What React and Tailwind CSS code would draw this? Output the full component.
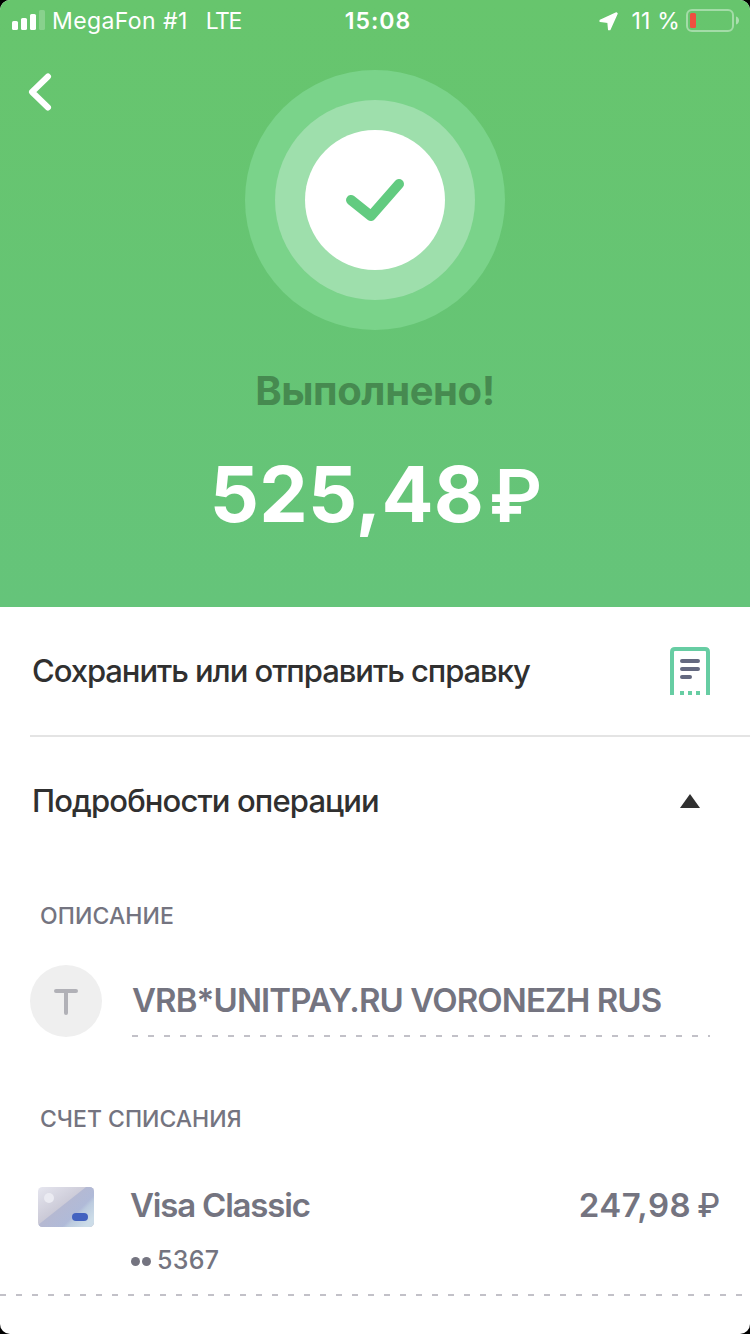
import React from 'react';

const SignalIcon = () => (
  <svg width="33" height="20" viewBox="0 0 33 20" fill="#fff">
    <rect x="0" y="11" width="6" height="9" rx="1.6" />
    <rect x="9" y="8" width="6" height="12" rx="1.6" />
    <rect x="18" y="4" width="6" height="16" rx="1.6" />
    <rect x="27" y="0" width="6" height="20" rx="1.6" opacity="0.22" />
  </svg>
);

const LocationIcon = () => (
  <svg width="19" height="19" viewBox="0 0 19 19" fill="#fff">
    <path
      d="M17.4 1 L1.2 8.4 L1.2 9.4 L9 10.2 L9.7 17.6 L10.8 17.6 L18 1.6 Z"
      stroke="#fff"
      strokeWidth="1.4"
      strokeLinejoin="round"
    />
  </svg>
);

const BatteryIcon = () => (
  <svg width="54" height="24" viewBox="0 0 54 24" fill="none">
    <rect x="1" y="2" width="46" height="21" rx="5" stroke="#fff" strokeOpacity="0.4" strokeWidth="2" />
    <rect x="4" y="5" width="6" height="15" rx="1.5" fill="#ef4f40" />
    <path d="M50 8.5 C54 9.5 54 15.5 50 16.5 Z" fill="#fff" fillOpacity="0.45" />
  </svg>
);

const ReceiptIcon = () => (
  <svg width="40" height="48" viewBox="0 0 40 48" fill="none">
    <path d="M2 48 V5 Q2 2 5 2 H35 Q38 2 38 5 V48" stroke="#67cda3" strokeWidth="4" />
    <path d="M12 14 H28 M12 22 H28 M12 30 H20" stroke="#646980" strokeWidth="4" strokeLinecap="round" />
    <path d="M10 46 H14 M18 46 H22 M26 46 H30" stroke="#67cda3" strokeWidth="4" />
  </svg>
);

const CardIcon = () => (
  <svg width="56" height="40" viewBox="0 0 56 40">
    <defs>
      <linearGradient id="cardBase" x1="0" y1="0" x2="0.75" y2="0.8">
        <stop offset="0" stopColor="#e6e6ef" />
        <stop offset="1" stopColor="#b9b7c7" />
      </linearGradient>
      <linearGradient id="cardShine" gradientUnits="userSpaceOnUse" x1="24" y1="18" x2="46" y2="40">
        <stop offset="0" stopColor="#b5b9d2" />
        <stop offset="0.5" stopColor="#b0bad8" />
        <stop offset="0.62" stopColor="#bccbdf" />
        <stop offset="1" stopColor="#ccdce8" />
      </linearGradient>
      <clipPath id="cardClip">
        <rect width="56" height="40" rx="4.5" />
      </clipPath>
    </defs>
    <g clipPath="url(#cardClip)">
      <rect width="56" height="40" fill="url(#cardBase)" />
      <path d="M48 0 H56 V40 H0 V38 Z" fill="url(#cardShine)" />
      <circle cx="11" cy="11" r="5" fill="#ebebf2" />
      <rect x="34" y="26" width="16" height="8" rx="4" fill="#4362c0" />
    </g>
  </svg>
);

const StatusBar = () => (
  <div className="grid h-10 grid-cols-3 items-center pl-3 pr-[10px] text-[23px] leading-none text-white">
    <div className="flex items-center">
      <SignalIcon />
      <span className="ml-[7px] pt-[2px] tracking-[0.4px]">MegaFon #1</span>
      <span className="ml-[18px] pt-[2px] tracking-[-1.4px]">LTE</span>
    </div>
    <span className="pl-1 pt-[2px] text-center font-semibold tracking-[1px]">15:08</span>
    <div className="flex items-center justify-end">
      <span className="pt-[2px]">
        <LocationIcon />
      </span>
      <span className="ml-[13px] mr-[6px] pt-[2px] tracking-[0.2px]">11 %</span>
      <BatteryIcon />
    </div>
  </div>
);

const SuccessMark = () => (
  <div className="flex size-[260px] items-center justify-center rounded-full bg-[#7ad38a]">
    <div className="flex size-[200px] items-center justify-center rounded-full bg-[#9edfac]">
      <div className="flex size-[140px] items-center justify-center rounded-full bg-white">
        <svg width="140" height="140" viewBox="0 0 140 140" fill="none">
          <path d="M46 70 L66 86 L94 54" stroke="#62cb80" strokeWidth="10" strokeLinecap="round" strokeLinejoin="round" />
        </svg>
      </div>
    </div>
  </div>
);

const DashedLine = () => (
  <div className="h-[2px] w-full bg-[repeating-linear-gradient(90deg,#c2c1c8_0px,#c2c1c8_6px,transparent_6px,transparent_16px)]" />
);

const ActionRow = ({ title, children }) => (
  <div className="flex h-32 items-center justify-between pl-8 pr-10">
    <span className="whitespace-nowrap text-[31px] font-medium leading-10 text-[#303030]">{title}</span>
    {children}
  </div>
);

const SectionLabel = ({ children }) => (
  <div className="pl-10 text-[23px] font-medium leading-8 text-[#747480]">{children}</div>
);

export default function App() {
  return (
    <div className="h-[1334px] w-[750px] bg-black font-['Inter','Liberation_Sans',sans-serif]">
      <div className="flex h-full flex-col overflow-hidden rounded-[10px] bg-white">
        {/* Operation status */}
        <header className="h-[607px] bg-linear-to-b from-[#67c56d] to-[#65c47a]">
          <StatusBar />
          <div className="grid grid-cols-[245px_260px_245px] pt-[30px]">
            <svg className="ml-7 mt-[2px]" width="24" height="40" viewBox="0 0 24 40" fill="none">
              <path d="M20 4.5 L4 20 L20 35.5" stroke="#fff" strokeWidth="6" strokeLinecap="round" strokeLinejoin="round" />
            </svg>
            <SuccessMark />
          </div>
          <h1 className="mt-9 text-center text-[40px] font-bold leading-[50px] tracking-[-0.4px] text-[#468a50]">
            Выполнено!
          </h1>
          <div className="mt-[34px] flex items-baseline justify-center pl-[2px] text-[77px] font-bold leading-[88px] text-white">
            <span className="tracking-[0.2px]">525,48</span>
            <span className="ml-[5px] text-[73px] font-semibold leading-none">₽</span>
          </div>
        </header>

        <ActionRow title={<span className="tracking-[-1.06px]">Сохранить или отправить справку</span>}>
          <ReceiptIcon />
        </ActionRow>
        <div className="ml-[30px] h-[2px] shrink-0 bg-[#e4e4e4]" />
        <ActionRow title={<span className="tracking-[-0.88px]">Подробности операции</span>}>
          <svg className="mr-[10px]" width="20" height="14" viewBox="0 0 20 14">
            <path d="M10 0 L20 14 H0 Z" fill="#303030" />
          </svg>
        </ActionRow>

        {/* Operation details */}
        <section className="pt-[35px] text-[#747480]">
          <SectionLabel>
            <span className="tracking-[0.1px]">ОПИСАНИЕ</span>
          </SectionLabel>
          <div className="flex pl-[30px] pr-10 pt-[33px]">
            <div className="flex size-[72px] items-center justify-center rounded-full bg-[#efefef] pt-[2px]">
              <svg width="24" height="26" viewBox="0 0 24 26" fill="none">
                <path d="M2 2 H22 M12 2 V24" stroke="#b1b1b7" strokeWidth="4" strokeLinecap="round" />
              </svg>
            </div>
            <div className="ml-[30px] flex-1">
              <div className="whitespace-nowrap pb-[15px] pt-[15px] text-[33px] font-semibold leading-10 tracking-[-0.9px]">
                VRB*UNITPAY.RU VORONEZH RUS
              </div>
              <DashedLine />
            </div>
          </div>
        </section>

        <section className="pt-[66px] text-[#747480]">
          <SectionLabel>СЧЕТ СПИСАНИЯ</SectionLabel>
          <div className="flex items-start pl-[38px] pr-[30px] pt-[50px]">
            <div className="pt-[2px]">
              <CardIcon />
            </div>
            <div className="ml-9 flex-1">
              <div className="flex items-baseline text-[33px] font-semibold leading-10">
                <span className="flex-1 tracking-[-1.2px]">Visa Classic</span>
                <span className="tracking-[0.5px]">247,98</span>
                <span className="ml-[6px] text-[32px] font-medium leading-none">₽</span>
              </div>
              <div className="mt-[19px] flex items-center text-[25px] font-medium leading-8">
                <span className="ml-px mt-[3px] flex gap-[2px]">
                  <i className="size-[9px] rounded-full bg-[#747480]" />
                  <i className="size-[9px] rounded-full bg-[#747480]" />
                </span>
                <span className="ml-[6px] tracking-[0.3px]">5367</span>
              </div>
            </div>
          </div>
          <div className="pt-[18px]">
            <DashedLine />
          </div>
        </section>
      </div>
    </div>
  );
}
